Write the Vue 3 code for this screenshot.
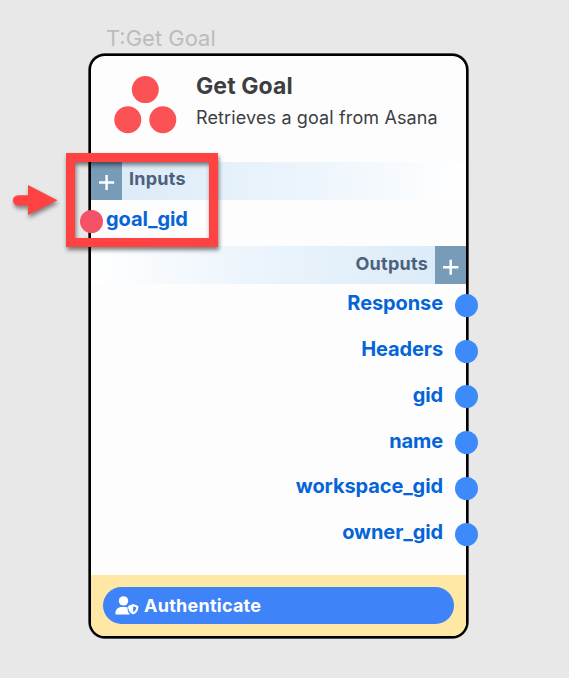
<script setup>
const outputs = ['Response', 'Headers', 'gid', 'name', 'workspace_gid', 'owner_gid']
</script>

<template>
  <main class="canvas">
    <div class="caption"><span>T:Get Goal</span></div>
    <section class="card">
      <header class="head">
        <svg class="logo" width="64" height="60" viewBox="0 0 64 60">
          <circle cx="32.3" cy="15.6" r="13.5" />
          <circle cx="14.8" cy="45.7" r="13.5" />
          <circle cx="49.8" cy="45.7" r="13.5" />
        </svg>
        <div class="titles">
          <h1><span>Get Goal</span></h1>
          <p><span>Retrieves a goal from Asana</span></p>
        </div>
      </header>
      <div class="bar bar-in">
        <button class="add"><svg width="31" height="38"><path d="M8 20.5h15.200M15.600 13v15" /></svg></button>
        <span>Inputs</span>
      </div>
      <div class="row row-in">
        <i class="port port-in"></i>
        <span>goal_gid</span>
      </div>
      <div class="bar bar-out">
        <span>Outputs</span>
        <button class="add"><svg width="31" height="38"><path d="M8 21.300h15.400M15.700 13.800v15" /></svg></button>
      </div>
      <div class="outs">
        <div v-for="name in outputs" :key="name" class="row row-out">
          <span>{{ name }}</span>
          <i class="port"></i>
        </div>
      </div>
      <footer class="foot">
        <button class="auth">
          <svg width="24" height="20" viewBox="0 0 24 20">
            <circle cx="8.500" cy="4.900" r="4.700" />
            <path d="M6.700 11h3.600c1.200 0 1.700.2 2.400.5-.4 3 .4 5.100 2.400 6.900H1.300c-.6 0-.9-.4-.9-1C.4 13.600 3 11 6.700 11Z" />
            <path d="M18.200 8l4.500 1.800c.5.2.7.5.7.9 0 3.200-1.500 6.100-4.600 7.500-.4.2-.8.2-1.200 0-3.100-1.400-4.500-4.300-4.500-7.500 0-.4.2-.7.600-.9Z" />
            <path class="cut" d="M18.200 10.200v5.900c1.900-1.100 2.900-2.700 3.100-4.700Z" />
          </svg>
          <span>Authenticate</span>
        </button>
      </footer>
    </section>
    <div class="highlight"></div>
    <svg class="arrow" width="62" height="46" viewBox="0 0 62 46">
      <path d="M18 15.200H28V5L57.500 20.200L28 35V25.500H18A5.150 5.150 0 0 1 18 15.200Z" />
    </svg>
  </main>
</template>

<style>
body { margin: 0; background: #e8e8e8; }
</style>

<style scoped>
* { box-sizing: border-box; }
.canvas {
  position: relative;
  width: 569px;
  height: 678px;
  padding: 23px 0 0 89px;
  background: #e8e8e8;
  font-family: Inter, "Liberation Sans", sans-serif;
  overflow: hidden;
}
.caption {
  height: 31px;
  padding-left: 17px;
  font-size: 22px;
  line-height: 30px;
  color: #bcbcbc;
}
.card {
  display: flex;
  flex-direction: column;
  width: 379px;
  height: 584px;
  border: 2px solid #000;
  border-radius: 16px;
  background: #fdfdfd;
  box-shadow: 0 0 0 0.5px #000, 0 0 0 1px rgba(0, 0, 0, 0.3);
}
.head { display: flex; height: 106px; padding: 17px 0 0 22px; }
.logo { margin-top: 1px; fill: #fb5355; }
.titles { padding-left: 19px; white-space: nowrap; color: #3c3e42; }
h1 { margin: 0; font-size: 23px; line-height: 26px; font-weight: 700; letter-spacing: 0.1px; }
p { margin: 7px 0 0; font-size: 18px; line-height: 24px; letter-spacing: 0.13px; }
button { margin: 0; padding: 0; border: 0; font-family: inherit; }
.bar {
  display: flex;
  height: 38px;
  font-size: 18px;
  font-weight: 700;
  line-height: 35px;
  letter-spacing: 0.25px;
  color: #4b617d;
}
.bar-in { line-height: 33px; background: linear-gradient(90deg, #d9eaf7, #edf5fc 60%, #fff); }
.bar-in > span { padding-left: 7px; }
.bar-out { justify-content: flex-end; background: linear-gradient(90deg, #fff, #edf5fc 40%, #d9eaf7); }
.bar-out > span { padding-right: 7px; }
.add { display: flex; background: #789bb7; }
.add path { fill: none; stroke: #fff; stroke-width: 2.400; }
.row { display: flex; align-items: center; font-size: 20px; font-weight: 700; letter-spacing: -0.1px; color: #0564d7; }
.port { flex: none; width: 23px; height: 23px; border-radius: 50%; background: #3d8afb; }
.row-in { height: 46px; padding-bottom: 4px; }
.row-in > span { padding: 0 0 5px 3px; }
.port-in { margin-left: -11px; background: #f45267; }
.outs { display: flex; flex-direction: column; height: 291px; }
.row-out { height: 45.750px; justify-content: flex-end; padding-bottom: 3px; }
.row-out > span { padding: 0 12px 4px 0; }
.row-out .port { margin-right: -12px; }
.foot { height: 61px; padding: 12px; border-radius: 0 0 14px 14px; background: #ffe7a6; }
.auth {
  display: flex;
  align-items: center;
  width: 351px;
  height: 37px;
  padding-left: 12px;
  border-radius: 19px;
  background: #3f83f8;
  color: #fff;
  font-size: 18px;
  font-weight: 700;
  letter-spacing: 0.25px;
}
.auth svg { fill: #fff; }
.auth .cut { fill: #3f83f8; }
.auth span { padding-left: 5px; }
.highlight {
  position: absolute;
  left: 66px;
  top: 153px;
  width: 152px;
  height: 94px;
  border: 9px solid #ff4343;
  filter: drop-shadow(1px 3px 2px rgba(0, 0, 0, 0.5));
}
.arrow { position: absolute; left: 0; top: 180px; fill: #ff4343; filter: drop-shadow(1px 3px 2px rgba(0, 0, 0, 0.45)); }
</style>
